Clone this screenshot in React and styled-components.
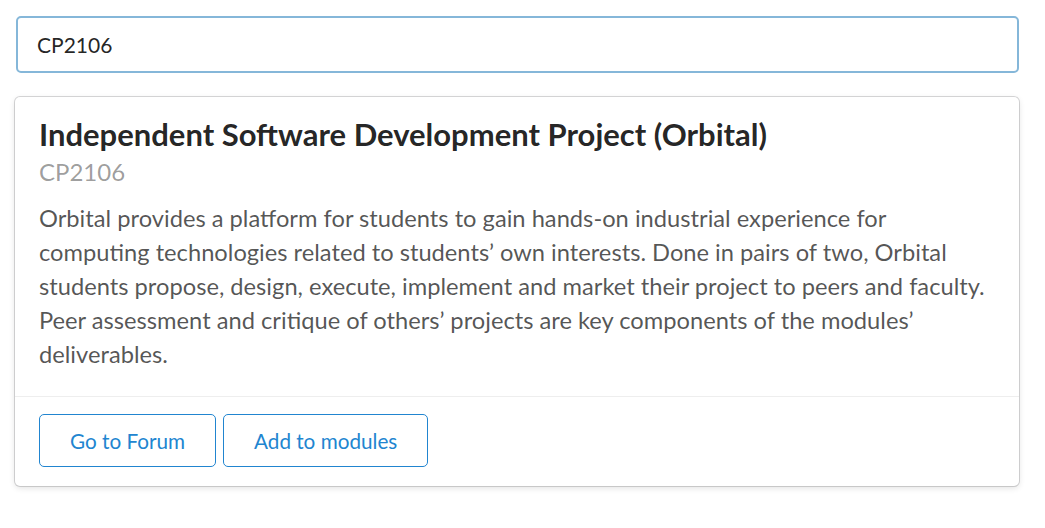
import React from 'react'
import styled, { createGlobalStyle } from 'styled-components'

const GlobalStyle = createGlobalStyle`
  html, body {
    margin: 0;
    padding: 0;
    background: #fff;
    font-family: Lato, "Helvetica Neue", Arial, sans-serif;
  }
  * { box-sizing: border-box; }
`

const Page = styled.div`
  width: 1045px;
  min-height: 528px;
  padding: 16px 26px 40px 15px;
  display: flex;
  flex-direction: column;
  gap: 24px;
`

const SearchInput = styled.input`
  height: 57px;
  margin-left: 1px;
  width: calc(100% - 1px);
  padding: 0 19px;
  font-family: Lato, sans-serif;
  font-size: 21px;
  color: rgba(0,0,0,0.87);
  border: 2px solid #85b7d9;
  border-radius: 5px;
  outline: none;
  caret-color: #000;
`

const Card = styled.div`
  background: #fff;
  border-radius: 5px;
  box-shadow: 0 2px 6px 0 rgba(0,0,0,0.12), 0 0 0 1px #d9d9da;
  display: flex;
  flex-direction: column;
`

const Content = styled.div`
  padding: 18px 24px 25px;
`

const Title = styled.div`
  font-size: 31px;
  font-weight: 700;
  line-height: 38px;
  color: rgba(0,0,0,0.87);
`

const Meta = styled.div`
  font-size: 24px;
  line-height: 30px;
  color: rgba(0,0,0,0.4);
  margin-top: 4px;
`

const Description = styled.p`
  margin: 14px 0 0;
  font-size: 23.7px;
  line-height: 34px;
  color: rgba(0,0,0,0.68);
`

const Extra = styled.div`
  border-top: 1px solid rgba(34,36,38,0.08);
  padding: 17px 24px 19px;
  display: flex;
  gap: 7px;
`

const BasicButton = styled.button`
  height: 53px;
  padding: 0 30px;
  background: #fff;
  border: 1.5px solid #2185d0;
  border-radius: 5px;
  color: #2185d0;
  font-family: Lato, sans-serif;
  font-size: 20.7px;
  cursor: pointer;
`

export default function App() {
  return (
    <Page>
      <GlobalStyle />
      <SearchInput defaultValue="CP2106" autoFocus />
      <Card>
        <Content>
          <Title>Independent Software Development Project (Orbital)</Title>
          <Meta>CP2106</Meta>
          <Description>
            Orbital provides a platform for students to gain hands-on industrial experience for
            computing technologies related to students’ own interests. Done in pairs of two, Orbital
            students propose, design, execute, implement and market their project to peers and faculty.
            Peer assessment and critique of others’ projects are key components of the modules’
            deliverables.
          </Description>
        </Content>
        <Extra>
          <BasicButton>Go to Forum</BasicButton>
          <BasicButton>Add to modules</BasicButton>
        </Extra>
      </Card>
    </Page>
  )
}
